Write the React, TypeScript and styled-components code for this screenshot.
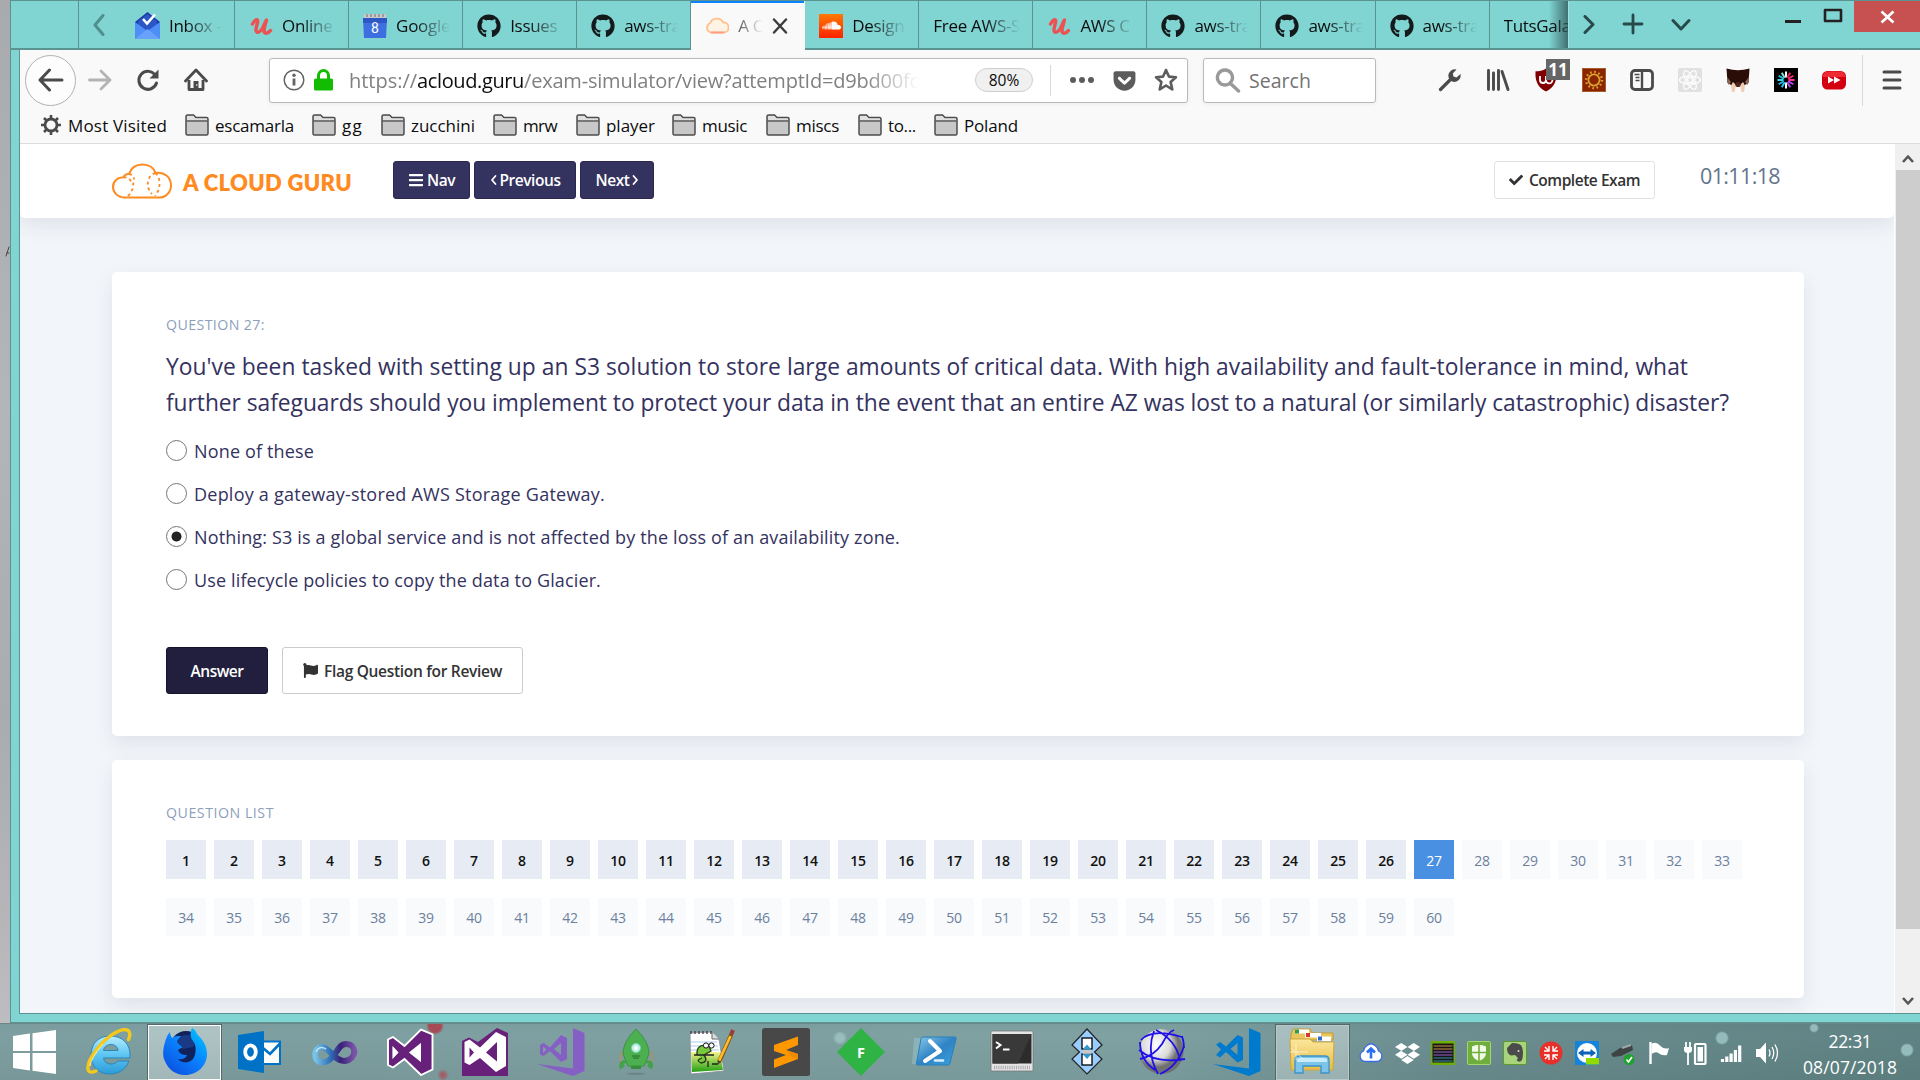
import React, { useLayoutEffect, useRef, useState } from "react";
import styled, { createGlobalStyle, css } from "styled-components";
import {
  FaBars,
  FaCheck,
  FaDropbox,
  FaFlag,
  FaGetPocket,
  FaGithub,
  FaSoundcloud,
} from "react-icons/fa";

const teal = "#80d4d2";
const tealEdge = "#5b9391";
const navy = "#34325e";
const ink = "#4a4a4a";

const Global = createGlobalStyle`
  html, body { margin: 0; padding: 0; overflow: hidden; }
  * { box-sizing: border-box; }
  body { font-family: "Open Sans", "Noto Sans", sans-serif; font-size: 17px; color: #0c0c0d; }
  svg { display: block; flex: none; }
`;

/* ---------- text fitted to a known advance width ---------- */

const FitSpan = styled.span`
  display: inline-block;
  align-self: flex-start;
  white-space: pre;
`;

function Fit({ w, children }: { w: number; children: string }) {
  const ref = useRef<HTMLSpanElement>(null);
  const [spacing, setSpacing] = useState(0);
  useLayoutEffect(() => {
    const el = ref.current;
    if (!el) return;
    el.style.letterSpacing = "0px";
    const next = (w - el.getBoundingClientRect().width) / children.length;
    el.style.letterSpacing = `${next}px`;
    setSpacing(next);
  }, [w, children]);
  return (
    <FitSpan ref={ref} style={{ letterSpacing: `${spacing}px` }}>
      {children}
    </FitSpan>
  );
}

/* ---------- shell ---------- */

const Desktop = styled.div`
  width: 1920px;
  height: 1080px;
  display: grid;
  grid-template-rows: 1023px 57px;
  overflow: hidden;
`;

const Upper = styled.div`
  display: grid;
  grid-template-columns: 10px 1910px;
`;

const Wallpaper = styled.div`
  background: linear-gradient(#a9aaad, #b4b5b8 40%, #a9abae 70%, #bdbcc0);
  padding-top: 244px;
`;

const Frame = styled.div`
  background: ${teal};
  border-left: 1px solid ${tealEdge};
  border-top: 1px solid ${tealEdge};
  border-bottom: 1px solid ${tealEdge};
  display: grid;
  grid-template-rows: 49px 964px 1fr;
  width: 1910px;
  height: 1023px;
`;

/* ---------- tab strip ---------- */

const TabStrip = styled.div`
  display: flex;
  height: 49px;
`;

const StripLead = styled.div`
  width: 68px;
  border-right: 1px solid ${tealEdge};
  box-shadow: inset 0 -2px ${tealEdge};
  flex: none;
`;

const ScrollLeft = styled.div`
  width: 42px;
  flex: none;
  display: flex;
  justify-content: center;
  padding: 13px 2px 0 0;
  box-shadow: inset 0 -2px ${tealEdge};
`;

const TabList = styled.div`
  display: flex;
  width: 1448px;
  flex: none;
  overflow: hidden;
  position: relative;
`;

const Tab = styled.div<{ $active?: boolean }>`
  flex: none;
  width: 114.05px;
  height: 49px;
  border-right: 1px solid ${tealEdge};
  display: flex;
  align-items: center;
  padding: 0 12px 0 14px;
  gap: 9px;
  box-shadow: inset 0 -2px ${tealEdge};
  ${(p) =>
    p.$active &&
    css`
      background: #f9f9fa;
      box-shadow: inset 0 2px #0a84ff;
      border-right-color: transparent;
      padding-right: 16px;
    `}
`;

const TabTitle = styled.div`
  flex: 1;
  min-width: 0;
  overflow: hidden;
  white-space: nowrap;
  font-size: 17px;
  letter-spacing: -0.3px;
  color: #0c0c0d;
  mask-image: linear-gradient(to left, transparent, #000 36px);
`;

const StripFade = styled.div`
  position: absolute;
  right: 0;
  top: 0;
  width: 20px;
  height: 47px;
  border-right: 1px solid #a3dfdd;
  background: linear-gradient(to right, transparent, rgba(30, 60, 62, 0.65));
`;

const StripTail = styled.div`
  flex: 1;
  display: flex;
  box-shadow: inset 0 -2px ${tealEdge};
`;

const TailButton = styled.div<{ $w: number; $top: number }>`
  width: ${(p) => p.$w}px;
  padding-top: ${(p) => p.$top}px;
  display: flex;
  justify-content: center;
  flex: none;
`;

const WindowButtons = styled.div`
  margin-left: auto;
  display: flex;
`;

const CloseButton = styled.div`
  width: 67px;
  height: 31px;
  background: #c75050;
  display: grid;
  place-items: center;
`;

/* ---------- toolbar ---------- */

const Inner = styled.div`
  margin-left: 8px;
  border-left: 1px solid ${tealEdge};
  border-bottom: 1px solid ${tealEdge};
  display: grid;
  grid-template-rows: 94px 870px;
  background: #f9f9fa;
`;

const Chrome = styled.div`
  border-bottom: 1px solid #dcdcdd;
  display: grid;
  grid-template-rows: 60px 33px;
`;

const Toolbar = styled.div`
  display: flex;
  align-items: center;
  padding-left: 5px;
`;

const BackButton = styled.div`
  width: 51px;
  height: 51px;
  border: 1px solid #b1b1b1;
  border-radius: 50%;
  background: #fdfdfd;
  display: grid;
  place-items: center;
`;

const ToolSlot = styled.div<{ $w?: number }>`
  width: ${(p) => p.$w ?? 48}px;
  height: 48px;
  flex: none;
  display: grid;
  place-items: center;
  position: relative;
`;

const Field = styled.div<{ $w: number; $ml: number }>`
  width: ${(p) => p.$w}px;
  margin-left: ${(p) => p.$ml}px;
  height: 45px;
  flex: none;
  background: #fff;
  border: 1px solid #b9b9b9;
  border-radius: 3px;
  box-shadow: 0 1px 4px rgba(0, 0, 0, 0.06);
  display: flex;
  align-items: center;
`;

const Url = styled.div`
  margin-left: 16px;
  width: 570px;
  white-space: nowrap;
  overflow: hidden;
  font-size: 20px;
  color: #808080;
  mask-image: linear-gradient(to left, transparent, #000 56px);
  b {
    font-weight: 400;
    color: #0c0c0d;
  }
`;

const ZoomPill = styled.div`
  margin-left: 56px;
  width: 58px;
  height: 24px;
  border: 1px solid #cfcfcf;
  border-radius: 12px;
  background: #f0f0f0;
  font-size: 15.5px;
  line-height: 22px;
  text-align: center;
`;

const Divider = styled.div<{ $h: number; $ml: number }>`
  width: 1px;
  height: ${(p) => p.$h}px;
  margin-left: ${(p) => p.$ml}px;
  background: #d9d9da;
  flex: none;
`;

const SearchText = styled.div`
  margin-left: 8px;
  font-size: 19.5px;
  color: #737373;
`;

const Extensions = styled.div`
  display: flex;
  margin-left: 50px;
`;

const Badge = styled.div`
  position: absolute;
  left: 24px;
  top: 3px;
  width: 24px;
  height: 21px;
  background: #666;
  color: #fff;
  font: 700 17px/21px "Open Sans", sans-serif;
  text-align: center;
`;

const Bookmarks = styled.div`
  display: flex;
  padding-left: 20px;
  height: 30px;
  align-items: center;
`;

const Bookmark = styled.div<{ $w: number }>`
  width: ${(p) => p.$w}px;
  display: flex;
  align-items: center;
  gap: 6px;
  font-size: 17px;
  flex: none;
`;

/* ---------- page ---------- */

const Viewport = styled.div`
  display: grid;
  grid-template-columns: 1fr 26px;
  height: 869px;
`;

const Page = styled.div`
  background: #f2f6fa;
  overflow: hidden;
  height: 869px;
  border-right: 1px solid #fff;
`;

const Header = styled.header`
  height: 74px;
  background: #fff;
  border-radius: 0 0 5px 5px;
  box-shadow: 0 8px 20px rgba(40, 40, 80, 0.09);
  display: flex;
  align-items: flex-start;
  padding: 17px 0 0 92px;
`;

const Brand = styled.div`
  display: flex;
  align-items: center;
  margin-top: 2px;
  width: 281px;
  color: #ff8a1f;
`;

const BrandName = styled.div`
  margin-left: 11px;
  font: 800 22px/30px "Lato", sans-serif;
  margin-top: 4px;
`;

const NavButton = styled.button<{ $w: number; $gap: number }>`
  width: ${(p) => p.$w}px;
  height: 38px;
  margin-right: 4px;
  padding: 0;
  background: ${navy};
  border: 1px solid #2a2850;
  border-radius: 3px;
  color: #fff;
  font: 600 15.5px "Open Sans", sans-serif;
  display: flex;
  align-items: center;
  justify-content: center;
  gap: ${(p) => p.$gap}px;
  ${FitSpan} {
    align-self: center;
  }
`;

const OutlineButton = styled.button<{ $w: number; $h: number; $edge: string }>`
  width: ${(p) => p.$w}px;
  height: ${(p) => p.$h}px;
  padding: 0;
  background: #fff;
  border: 1px solid ${(p) => p.$edge};
  border-radius: 3px;
  color: #333;
  font: 600 15.5px "Open Sans", sans-serif;
  display: flex;
  align-items: center;
  justify-content: center;
  gap: 6px;
  ${FitSpan} {
    align-self: center;
  }
`;

const HeaderRight = styled.div`
  margin-left: auto;
  display: flex;
  padding-right: 114px;
`;

const Timer = styled.div`
  margin-left: 45px;
  font-size: 21.5px;
  line-height: 30px;
  color: #64748c;
`;

const Card = styled.section<{ $h: number; $mt: number }>`
  width: 1692px;
  height: ${(p) => p.$h}px;
  margin: ${(p) => p.$mt}px 0 0 92px;
  padding: 42px 54px 0;
  background: #fff;
  border-radius: 5px;
  box-shadow: 0 8px 20px rgba(40, 40, 80, 0.09);
`;

const Eyebrow = styled.h2`
  margin: 0;
  font: 500 14.2px/22px "Open Sans", sans-serif;
  color: #8d9fbb;
`;

const Question = styled.p`
  margin: 13px 0 0;
  font-size: 22.8px;
  line-height: 36px;
  color: ${navy};
  display: flex;
  flex-direction: column;
`;

const Options = styled.div`
  margin-top: 8px;
  display: grid;
  grid-auto-rows: 43px;
`;

const Option = styled.label`
  display: flex;
  align-items: center;
  gap: 7px;
  height: 43px;
  font-size: 18px;
  color: ${navy};
  ${FitSpan} {
    align-self: center;
  }
`;

const Radio = styled.span<{ $on: boolean }>`
  width: 21px;
  height: 21px;
  border: 1px solid #767676;
  border-radius: 50%;
  background: ${(p) => (p.$on ? "radial-gradient(circle, #222 4.6px, #fff 5.4px)" : "#fff")};
`;

const Actions = styled.div`
  display: flex;
  gap: 14px;
  margin-top: 46px;
`;

const AnswerButton = styled.button`
  width: 102px;
  height: 47px;
  padding: 0;
  background: #211f3d;
  border: 1px solid #15132c;
  border-radius: 3px;
  color: #fff;
  font: 600 15.5px "Open Sans", sans-serif;
`;

const Cells = styled.div`
  margin-top: 16px;
  display: grid;
  grid-template-columns: repeat(33, 40px);
  grid-template-rows: 39px 38px;
  column-gap: 8px;
  row-gap: 19px;
`;

const Cell = styled.div<{ $state: "done" | "now" | "todo" }>`
  display: flex;
  justify-content: center;
  font-size: 14px;
  line-height: 42px;
  height: 100%;
  letter-spacing: -0.2px;
  font-weight: ${(p) => ({ done: 600, now: 500, todo: 400 })[p.$state]};
  background: ${(p) => ({ done: "#e7ecf4", now: "#4990e2", todo: "#f8fafc" })[p.$state]};
  color: ${(p) => ({ done: "#111", now: "#fff", todo: "#6c7f9c" })[p.$state]};
  &:nth-child(n + 34) {
    line-height: 39px;
  }
`;

const Scrollbar = styled.div`
  background: #f0f0f0;
  display: grid;
  grid-template-rows: 26px 759px 1fr;
  justify-items: center;
`;

const Thumb = styled.div`
  width: 24px;
  background: #cdcdcd;
`;

const ScrollArrow = styled.div<{ $end?: boolean }>`
  align-self: ${(p) => (p.$end ? "end" : "start")};
  padding: ${(p) => (p.$end ? "0 0 7px" : "10px 0 0")};
`;

/* ---------- taskbar ---------- */

const Taskbar = styled.div`
  display: flex;
  border-top: 1px solid #6d8584;
  background:
    radial-gradient(circle at 435px 2px, #a64a55 6px, transparent 9px),
    radial-gradient(circle at 443px 51px, rgba(176, 70, 85, 0.7) 2px, transparent 6px),
    radial-gradient(circle at 1722px 14px, #95bcbc 5px, transparent 7px),
    radial-gradient(circle at 1814px 4px, #95bcbc 3px, transparent 5px),
    radial-gradient(circle at 1907px 26px, #95bcbc 5px, transparent 7px),
    radial-gradient(circle at 840px 14px, #98bdbd 4px, transparent 7px),
    linear-gradient(rgba(0, 0, 0, 0.02), transparent 20%, rgba(0, 0, 0, 0.05)),
    linear-gradient(to right, #7e9fa1 0, #7fa1a2 60%, #6c8e90 75%, #5f8384 100%);
`;

const Apps = styled.div`
  display: flex;
  width: 1353px;
  flex: none;
`;

const AppSlot = styled.div<{ $open?: boolean; $first?: boolean }>`
  width: 75.2px;
  margin-left: ${(p) => (p.$first ? "-3.4px" : "0")};
  flex: none;
  display: grid;
  place-items: center;
  padding: 0 1px;
  ${(p) =>
    p.$open &&
    css`
      background: linear-gradient(rgba(255, 255, 255, 0.38), rgba(255, 255, 255, 0.3)) content-box;
    `}
`;

const OpenRim = styled.div<{ $bright?: boolean }>`
  width: 73px;
  height: 55px;
  outline: 1px solid #55696a;
  outline-offset: 0;
  border: 1px solid ${(p) => (p.$bright ? "#fff" : "#b5c9c9")};
  display: grid;
  place-items: center;
`;

const Tray = styled.div`
  display: flex;
`;

const TraySlot = styled.div`
  width: 36px;
  display: grid;
  place-items: center;
  padding-top: 2px;
`;

const Clock = styled.div`
  width: 130px;
  display: flex;
  flex-direction: column;
  align-items: center;
  justify-content: center;
  color: #fff;
  font-size: 17.5px;
  line-height: 26px;
  padding-top: 3px;
  ${FitSpan} {
    align-self: center;
  }
`;

/* ---------- small icons ---------- */

const Stroke = ({
  d,
  w = 24,
  h = 24,
  sw = 3,
  color = ink,
  cap = "round",
}: {
  d: string;
  w?: number;
  h?: number;
  sw?: number;
  color?: string;
  cap?: "round" | "butt";
}) => (
  <svg width={w} height={h} viewBox={`0 0 ${w} ${h}`}>
    <path d={d} fill="none" stroke={color} strokeWidth={sw} strokeLinecap={cap} strokeLinejoin="round" />
  </svg>
);

const InboxIcon = () => (
  <svg width="25" height="28" viewBox="0 0 25 28">
    <path d="M0 10 12.500 0 25 10V18H0Z" fill="#1c3aa9" />
    <path d="M3 9.500 12.500 2 22 9.500V18H3Z" fill="#2a56c6" />
    <path d="M0 10 12.500 19 25 10V27H0Z" fill="#4e8ef7" />
    <path d="M0 27 12.500 17 25 27Z" fill="#69a2fb" />
    <path d="m8 7 4 4.500 8-9" fill="none" stroke="#fff" strokeWidth="2.600" />
  </svg>
);

const UdemyIcon = () => (
  <svg width="24" height="24" viewBox="0 0 24 24">
    <path
      d="M3.500 10C5 7.500 7 5 8.500 6c1.300 1.500-2 7-1.500 10.500.5 2.800 4 2 6-1.500C15 12 15.500 8.500 17.500 6c-1 4-3 8.500-2.300 12 .6 2 4 1.500 6.300-1.500"
      fill="none"
      stroke="#ec5252"
      strokeWidth="3.400"
      strokeLinecap="round"
      strokeLinejoin="round"
    />
  </svg>
);

const CalendarIcon = () => (
  <svg width="24" height="24" viewBox="0 0 24 24">
    <rect x="1" y="0" width="22" height="6" fill="#c9c9c9" />
    <path d="M4 0v3M8 0v3M12 0v3M16 0v3M20 0v3" stroke="#8d8d8d" strokeWidth="1.500" />
    <path d="M0 4H24L23 24H1Z" fill="#3d6fe0" />
    <path d="M0 4H24V9H0Z" fill="#2d57c4" />
    <text x="12" y="19" fill="#fff" fontSize="14" textAnchor="middle" fontFamily="Roboto, sans-serif">8</text>
  </svg>
);

const CloudFavicon = () => (
  <svg width="24" height="24" viewBox="0 0 24 24">
    <path d="M6 18.500a5 5 0 0 1-.8-9.500 7 6.500 0 0 1 13-.5A5 5 0 0 1 19 18.500Z" fill="#fff3e6" stroke="#ffc18a" strokeWidth="1.800" />
    <path d="M6 18.500H19" stroke="#ff9c86" strokeWidth="1.800" />
  </svg>
);

const SoundcloudBox = styled.div`
  width: 24px;
  height: 24px;
  flex: none;
  display: grid;
  place-items: center;
  background: linear-gradient(#ff7a00, #ff2200);
  color: #fff;
`;

const FolderIcon = () => (
  <svg width="24" height="22" viewBox="0 0 24 22">
    <path d="M1 19.500V2.500Q1 1 2.500 1H8.500L11 3.500H21.500Q23 3.500 23 5V19.500Q23 21 21.500 21H2.500Q1 21 1 19.500Z" fill="#c8c8c8" stroke="#4c4c4c" strokeWidth="1.500" />
    <path d="M1.500 7H22.500" stroke="#4c4c4c" strokeWidth="1.300" />
    <path d="M2 2H8.300L10.500 4.500H22V6H2Z" fill="#e0e0e0" />
  </svg>
);

const GearIcon = () => (
  <svg width="22" height="22" viewBox="0 0 22 22">
    <g stroke="#4a4a4a" fill="none">
      <circle cx="11" cy="11" r="6" strokeWidth="2.800" />
      <path d="M11 1V5M11 17V21M1 11H5M17 11H21M4 4 6.500 6.500M15.500 15.500 18 18M18 4 15.500 6.500M6.500 15.500 4 18" strokeWidth="2.600" />
    </g>
  </svg>
);

const ReloadIcon = () => (
  <svg width="24" height="24" viewBox="0 0 24 24">
    <path d="M19.500 7.500A9 9 0 1 0 20.500 15" fill="none" stroke={ink} strokeWidth="3" strokeLinecap="round" />
    <path d="M22.500 1.500V10.500H13.500Z" fill={ink} />
  </svg>
);

const HomeIcon = () => (
  <svg width="24" height="24" viewBox="0 0 24 24">
    <path d="M1.500 13 12 2 22.500 13" fill="none" stroke={ink} strokeWidth="2.800" strokeLinecap="round" strokeLinejoin="round" />
    <path d="M5 12V21.500H19V12" fill="none" stroke={ink} strokeWidth="2.800" strokeLinejoin="round" />
    <path d="M9.500 21V13H14.500V21Z" fill={ink} />
    <circle cx="12.800" cy="17" r=".8" fill="#fff" />
  </svg>
);

const InfoIcon = () => (
  <svg width="22" height="22" viewBox="0 0 22 22">
    <circle cx="11" cy="11" r="9.800" fill="none" stroke="#636363" strokeWidth="1.500" />
    <rect x="9.600" y="9.500" width="2.800" height="7" fill="#636363" />
    <circle cx="11" cy="6.300" r="1.700" fill="#636363" />
  </svg>
);

const LockIcon = () => (
  <svg width="19" height="22" viewBox="0 0 19 22">
    <path d="M4.500 11V6.500a5 5 0 0 1 10 0V11" fill="none" stroke="#12bc00" strokeWidth="3" />
    <rect x="0" y="9.500" width="19" height="12" rx="1.500" fill="#12bc00" />
  </svg>
);

const StarIcon = () => (
  <svg width="24" height="24" viewBox="0 0 24 24">
    <path d="m12 2 2.900 6.600 7.100.6-5.400 4.700 1.700 7.600L12 17.500l-6.300 4 1.700-7.600L2 9.200l7.100-.6Z" fill="none" stroke="#5c5c5c" strokeWidth="2.600" strokeLinejoin="round" />
  </svg>
);

const WrenchIcon = () => (
  <svg width="24" height="24" viewBox="0 0 24 24">
    <path d="M2.500 21.500 13 11" stroke={ink} strokeWidth="3.200" strokeLinecap="round" />
    <path d="M18.500 1.500a6.500 6.500 0 0 0-7.500 9l3 3a6.500 6.500 0 0 0 8.500-7.500L18.500 9.500 15.500 8.500 14.800 5.500Z" fill={ink} />
  </svg>
);

const LibraryIcon = () => (
  <svg width="24" height="24" viewBox="0 0 24 24">
    <g stroke={ink} strokeWidth="2.900" strokeLinecap="round">
      <path d="M2.500 2.500V21.500M7.500 5V21.500M12.500 2.500V21.500M16 3.500 22 21.500" fill="none" />
    </g>
  </svg>
);

const ShieldIcon = () => (
  <svg width="24" height="24" viewBox="0 0 24 24">
    <path d="M12 .5C9 3 5 3.200 1.500 3.200 1 12 3 19 12 23.500 21 19 23 12 22.500 3.200 19 3.200 15 3 12 .5Z" fill="#800000" />
    <path d="M6 8v4q0 3 3 3t3-3V8v4a3.200 3.200 0 1 0 3.200-3" fill="none" stroke="#fff" strokeWidth="1.800" />
  </svg>
);

const SunIcon = () => (
  <svg width="24" height="24" viewBox="0 0 24 24">
    <rect width="24" height="24" fill="#8b2500" />
    <rect x=".5" y=".5" width="23" height="23" fill="none" stroke="#a55c2c" />
    <circle cx="12" cy="12" r="5.600" fill="none" stroke="#dba330" strokeWidth="1.800" />
    <circle cx="12" cy="12" r="8" fill="none" stroke="#dba330" strokeWidth="2.400" strokeDasharray="1.600 2.589" />
  </svg>
);

const SidebarIcon = () => (
  <svg width="24" height="24" viewBox="0 0 24 24">
    <rect x="1.500" y="2.500" width="21" height="19" rx="3.500" fill="none" stroke={ink} strokeWidth="2.800" />
    <path d="M12 2.500V21.500" stroke={ink} strokeWidth="2.400" />
    <path d="M4.500 6.500H9.500M5.500 9.500H9.500M5.500 12.500H9.500" stroke={ink} strokeWidth="1.500" />
  </svg>
);

const ReactIcon = () => (
  <svg width="24" height="24" viewBox="0 0 24 24">
    <rect width="24" height="24" rx="2" fill="#e1e1e1" />
    <g fill="none" stroke="#fff" strokeWidth="1.200">
      <ellipse cx="12" cy="12" rx="10.500" ry="4" />
      <ellipse cx="12" cy="12" rx="10.500" ry="4" transform="rotate(60 12 12)" />
      <ellipse cx="12" cy="12" rx="10.500" ry="4" transform="rotate(120 12 12)" />
      <circle cx="12" cy="12" r="2.500" />
    </g>
  </svg>
);

const FaceIcon = () => (
  <svg width="24" height="24" viewBox="0 0 24 24">
    <path d="M.5.500Q12 4 23.500.5L22.500 15 17 18H7L1.500 15Z" fill="#2b0d08" />
    <path d="M1 9 2.500 17 5 14ZM23 9 21.500 17 19 14Z" fill="#8d6557" />
    <path d="M6 24 5 17.500l2-3.500 3 3-1.500 7ZM18 24l1-6.500-2-3.500-3 3 1.500 7Z" fill="#f0cdb4" />
    <circle cx="12" cy="16.500" r="2.600" fill="#4e2419" />
  </svg>
);

const BurstIcon = () => (
  <svg width="24" height="24" viewBox="0 0 24 24">
    <rect width="24" height="24" fill="#000" />
    {["#fff", "#e01e5a", "#ff2f6a", "#ff2fa0", "#b84af0", "#a847e8", "#fff", "#28c8f0", "#1fb6e6", "#36d6e0", "#1fc6e6", "#7be0d6"].map((c, i) => (
      <path key={i} d="M12 3.500V9.500" stroke={c} strokeWidth="2" transform={`rotate(${i * 30} 12 12)`} />
    ))}
  </svg>
);

const ForwardBadge = () => (
  <svg width="24" height="24" viewBox="0 0 24 24">
    <rect x="0" y="3" width="24" height="18.500" rx="5.500" fill="#d5000f" />
    <path d="M4 3.800Q12 2.500 20 3.800 23 5 23.500 9H.5Q1 5 4 3.800Z" fill="#ee2a34" />
    <path d="M6 8.500 12 12 6 15.500ZM12 8.500 18.500 12 12 15.500Z" fill="#fff" />
  </svg>
);

const BrandCloud = () => (
  <svg width="60" height="36" viewBox="0 0 60 36">
    <g fill="none" stroke="#ff8a1f" strokeWidth="2">
      <path d="M13 34.500C5 34.500 1 29 1 24c0-6 5-10 10.500-9.800C12 12 15 10.500 17 11 19 5 24 1.500 30.500 1.500 37 1.500 42 5 43.500 10 52 8.500 59 14 59 22.500 59 29 54 34.500 47 34.500Z" />
      <path d="M11.500 14.200C15 14 18 16 19.500 19M17 11c3 .5 5 2.500 5 5.500M16 33C20 29 22 24 21 18M43.500 10C35 12 33 24 40 31M43.500 10C49 15 49 26 43 33" strokeDasharray="3 3" strokeWidth="1.800" />
    </g>
  </svg>
);

/* ---------- taskbar icons, 48 x 48 ---------- */

const Art = ({ children, s = 48 }: { children: React.ReactNode; s?: number }) => (
  <svg width={s} height={s} viewBox={`0 0 ${s} ${s}`}>
    {children}
  </svg>
);

const StartIcon = () => (
  <Art>
    <path d="M3 8 20 5.500V23H3ZM22.500 5.200 46 2V23H22.500ZM3 25H20V42.500L3 40ZM22.500 25H46V46L22.500 42.800Z" fill="#fff" />
  </Art>
);

const IeIcon = () => (
  <Art>
    <defs>
      <linearGradient id="ie" x1="0" y1="0" x2="0" y2="1">
        <stop offset="0" stopColor="#b5ecff" />
        <stop offset=".5" stopColor="#5cc5f2" />
        <stop offset="1" stopColor="#2c9bd9" />
      </linearGradient>
    </defs>
    <path
      d="M45 30H18.500C19.500 37.500 30 37.500 32.500 33H44C40 43 32 46 25 46 13 46 6 38 6 27 6 15 14 8 25 8 38 8 46 16 45 30ZM18.500 22.500H33C32.500 14.500 19.500 14.500 18.500 22.500Z"
      fill="url(#ie)"
      stroke="#2b86b8"
      strokeWidth="1"
      fillRule="evenodd"
    />
    <path d="M11 43C0 48 0 36 12 21 24 6 38 -1 43 2.500q3.500 2.500.5 9" fill="none" stroke="#f4c81c" strokeWidth="3.400" strokeLinecap="round" />
    <path d="M5 38Q6 30 18 16" fill="none" stroke="#fff2a0" strokeWidth="1" />
  </Art>
);

const FirefoxIcon = () => (
  <Art>
    <defs>
      <linearGradient id="ff" x1="1" y1="0" x2=".2" y2="1">
        <stop offset="0" stopColor="#0cf" />
        <stop offset=".5" stopColor="#0a84ff" />
        <stop offset="1" stopColor="#0b4fe0" />
      </linearGradient>
    </defs>
    <circle cx="25" cy="19" r="16" fill="#10225c" />
    <path d="M14 11Q24 4 36 9L32 19 22 21Z" fill="#1b3a86" />
    <path
      d="M5 11C3 17 1 24 3 31 7 42 15 47 24 47 37 47 46 37 46 26 46 17 41 11 36 6 35 3 33 1 31 0 29 5 29 9 32 13 36 18 35 27 32 31 28 36 20 35 17 31 22 32 25 30 26 27 21 27 18 25 17 22Q19 20 21 20C22 18 17 17 16 13 17 11 19 9 20 8 16 8 13 8 11 10 9 7 9 5 9 4Q6 7 5 11Z"
      fill="url(#ff)"
    />
  </Art>
);

const OutlookIcon = () => (
  <Art>
    <path d="M26 13.500H44V36H26Z" fill="#fff" stroke="#0072c6" strokeWidth="2" />
    <path d="m27 20 7 6 10-10.500" fill="none" stroke="#0072c6" strokeWidth="2.600" />
    <path d="M2 7 28 3V45L2 41Z" fill="#0072c6" />
    <ellipse cx="14.500" cy="24" rx="5.300" ry="6.700" fill="none" stroke="#fff" strokeWidth="3.800" />
  </Art>
);

const InfinityIcon = () => (
  <Art>
    <defs>
      <linearGradient id="inf">
        <stop offset="0" stopColor="#78c3e6" />
        <stop offset=".4" stopColor="#2e6db2" />
        <stop offset=".65" stopColor="#3b2178" />
        <stop offset="1" stopColor="#7a54a8" />
      </linearGradient>
    </defs>
    <path d="M24 26C18 34 13 35 9 34 2 32 3 20 10 19 18 18 23 34 34 33 46 31 46 17 36 16 30 15 27 21 24 26Z" fill="none" stroke="url(#inf)" strokeWidth="6" />
    <path d="M5 24Q8 17 15 21" fill="none" stroke="#b9e4f5" strokeWidth="1.500" />
  </Art>
);

const VisualStudio = () => (
  <Art>
    <path
      d="M2.500 12 7 9.500 18.500 18 35 2 46 6.500V41L35 46.500 18.500 31 7 39 2.500 36.500ZM6.500 18V31L12.500 24.500ZM23 24.500 35 34V15Z"
      fill="#68217a"
      fillRule="evenodd"
    />
    <path d="M6.500 18V31L12.500 24.500ZM23 24.500 35 34V15Z" fill="#fff" />
    <path d="M2 11.500 7 9 18.500 18 35 1.500 46.500 6.300V41.500L35 47 18.500 31 7 39.500 2 37Z" fill="none" stroke="#fff" strokeWidth="1.900" />
  </Art>
);

const VisualStudioInverse = () => (
  <Art>
    <path d="M1 13 8 9.500 17 14 36 0 47 5V48H1Z" fill="#68217a" />
    <path
      d="M3.500 14 8.500 11.500 19 19.500 35 4 45 9V38L35 44 19 30 8.500 37 3.500 34.500ZM8.500 19.500V29.500L13 24.500ZM25 24.500 36 33.500V14Z"
      fill="#fff"
      fillRule="evenodd"
    />
  </Art>
);

const ribbon = "M36 0 47.500 5V43L36 48 0 36 36 40.500Z";

const VisualStudioLight = () => (
  <Art>
    <path d={ribbon} fill="#865fc5" />
    <path d="M3 17 6.500 15 13 19.500 24 7 30 10V31L24 34 13 23 6.500 28 3 26.500ZM6 18.500V25L9.500 21.500ZM17 21 24 27V15Z" fill="#865fc5" fillRule="evenodd" />
  </Art>
);

const CodeIcon = () => (
  <Art>
    <path d={ribbon} fill="#007acc" />
    <path d="M3 16.500 7 14 13 18.500 24.500 7 30 9.500V32L24.500 34.500 13 24 7 29.500 3 27 8 21.500ZM17.500 21 24.500 27V15Z" fill="#007acc" fillRule="evenodd" />
  </Art>
);

const RocketIcon = () => (
  <Art>
    <path d="M13 23Q6 25 10 37M35 23Q43 25 38 37" fill="none" stroke="#a59173" strokeWidth="2.200" />
    <path d="M24 1C15 10 11 18 11 26L16 38H32L37 26C37 18 33 10 24 1Z" fill="#4caf50" stroke="#3b9540" />
    <path d="M19 38V41H29V38Z" fill="#378c3e" />
    <path d="M15 34Q8 33 9 39L12 37M33 34Q41 33 39 39L36 37" fill="none" stroke="#43a047" strokeWidth="3" />
    <circle cx="24" cy="20" r="4.600" fill="#bff0e4" stroke="#78cfae" />
    <circle cx="24" cy="20" r="2" fill="#fff" />
    <path d="M20 28H28M21 30H27" stroke="#256d2b" strokeWidth="1.200" />
    <ellipse cx="24" cy="45.800" rx="9" ry="1" fill="#6b8082" />
  </Art>
);

const NotepadIcon = () => (
  <Art>
    <defs>
      <linearGradient id="npp" x1="0" y1="0" x2="0" y2="1">
        <stop offset="0" stopColor="#f4f48a" />
        <stop offset="1" stopColor="#22a012" />
      </linearGradient>
    </defs>
    <path d="M3 5 25 4 32 11 37 43 4 46Z" fill="#fff" stroke="#889" strokeWidth=".8" />
    <path d="M4 14H30M4 18H31M4 22H32" stroke="#a9cbe8" />
    <path d="M4 24H33L36 42 5 44Z" fill="url(#npp)" />
    <path d="M4 6V3M8 6V3M12 6V3M16 6V3M20 6V3M24 6V3" stroke="#444" strokeWidth="1.400" />
    <path d="M25 4V11H32" fill="#ddd" stroke="#666" />
    <path d="M10 27Q9 15 22 18L24 23 17 27Q22 34 14 35 8 32 15 30" fill="#78ca3c" stroke="#263b14" strokeWidth="1.300" />
    <circle cx="19" cy="17.500" r="2.600" fill="#fff" stroke="#111" />
    <circle cx="24.500" cy="17.500" r="2.600" fill="#fff" stroke="#111" />
    <path d="M7 27H27M21 33V39M25 36H31" stroke="#222" strokeWidth="1.300" />
    <path d="M32 34 44 7" stroke="#7a4a00" strokeWidth="4.200" />
    <path d="M32 33 43.500 8" stroke="#ffb92e" strokeWidth="2.800" />
    <path d="M44 7 46 2" stroke="#9c3b35" strokeWidth="4" />
    <path d="M30.500 37 31 32 34 34Z" fill="#443" />
  </Art>
);

const SublimeIcon = () => (
  <Art>
    <rect width="48" height="48" rx="2.500" fill="#484848" />
    <path d="M12 17 36 8.500V17L24 22 36 26V31L12 40V31.500L24 27 12 23Z" fill="#ff9800" />
    <path d="M24 22 36 26V31L30 29Z" fill="#f08a00" />
  </Art>
);

const DiamondIcon = () => (
  <Art>
    <path d="M24 0 48 24 24 48 0 24Z" fill="#2fb344" />
    <text x="24" y="29.500" fill="#fff" fontSize="14.500" fontWeight="700" textAnchor="middle" fontFamily="Open Sans, sans-serif">F</text>
  </Art>
);

const PowerShellIcon = () => (
  <Art>
    <defs>
      <linearGradient id="ps" x1="0" y1="0" x2="1" y2="1">
        <stop offset="0" stopColor="#8ccbe9" />
        <stop offset=".5" stopColor="#2f83c5" />
        <stop offset="1" stopColor="#3aa2dc" />
      </linearGradient>
    </defs>
    <path d="M2 10H14L8 36H0Z" fill="#a7d4e8" opacity=".35" />
    <path d="M11 9H43Q44.500 9 44 11L38 35Q37.500 37 36 37H6Q4 37 4.500 35L9 11Q9.500 9 11 9Z" fill="url(#ps)" stroke="#2680b8" />
    <path d="m18 13 10 10L13 33" fill="none" stroke="#fff" strokeWidth="4" strokeLinecap="round" strokeLinejoin="round" />
    <path d="M23 32.500H31" stroke="#d8eefa" strokeWidth="2.600" strokeLinecap="round" />
  </Art>
);

const TerminalIcon = () => (
  <Art>
    <rect x="3" y="3" width="42" height="40" rx="1" fill="#e4e4e4" stroke="#777" strokeWidth=".8" />
    <rect x="4.500" y="6" width="39" height="29.500" fill="#2c2c2c" />
    <path d="M4.500 6H43.500L30 35.500H4.500Z" fill="#393939" />
    <path d="M6 39.500H42" stroke="#aaa" strokeWidth="3.400" strokeDasharray="1 1.200" />
    <path d="m8 14 4.500 3L8 20.500" fill="none" stroke="#fff" strokeWidth="2" />
    <path d="M15 21.500H21.500" stroke="#fff" strokeWidth="2" />
  </Art>
);

const MergeIcon = () => (
  <Art>
    <path d="M24 1 39 17 31.500 24 39 31 24 46 9 31 16.500 24 9 17Z" fill="#99ccff" stroke="#222" strokeWidth="1.200" />
    <rect x="19" y="10" width="10" height="11" fill="#fff" stroke="#000" strokeWidth="1.300" />
    <rect x="19" y="26" width="10" height="11" fill="#fff" stroke="#000" strokeWidth="1.300" />
    <path d="M24 16.500 28.500 21.500H19.500ZM24 31 28.500 26H19.500Z" fill="#3399cc" />
    <rect x="19.500" y="21.800" width="9" height="4" fill="#c8c8c8" />
  </Art>
);

const SphereIcon = () => (
  <Art>
    <defs>
      <radialGradient id="sph" cx=".38" cy=".35">
        <stop offset="0" stopColor="#fff" />
        <stop offset=".65" stopColor="#dadada" />
        <stop offset="1" stopColor="#707070" />
      </radialGradient>
    </defs>
    <ellipse cx="23.500" cy="23.500" rx="22" ry="22.500" fill="url(#sph)" />
    <g fill="none" stroke="#1d10e8" strokeWidth="1.800">
      <path d="M3 12Q14 0 44 9M1 22Q18 36 47 31M2 31Q16 28 24 16 30 4 36 2M18 2Q38 12 42 32M16 3Q8 24 20 46M2 14Q2 32 17 42M46 18Q40 38 22 46M44 8Q46 14 46 20" />
    </g>
  </Art>
);

const ExplorerIcon = () => (
  <Art>
    <defs>
      <linearGradient id="exp" x1="0" y1="0" x2="0" y2="1">
        <stop offset="0" stopColor="#fbe79c" />
        <stop offset="1" stopColor="#e5bc49" />
      </linearGradient>
    </defs>
    <path d="M3 6 5 1H22L24 5H45V12H3Z" fill="#e9c65c" stroke="#c29b32" />
    <rect x="7" y="1.500" width="14" height="4" fill="#fff" />
    <rect x="7" y="1.500" width="4" height="4" fill="#2f9e4c" />
    <rect x="17" y="5" width="16" height="4.500" fill="#fff" />
    <rect x="18" y="5" width="4" height="4" fill="#d6382c" />
    <path d="M2 11H22L25 14H46L45 42H3Z" fill="url(#exp)" stroke="#cfa53b" />
    <rect x="29" y="8.500" width="14" height="4.500" fill="#fff" />
    <rect x="30" y="8.500" width="4" height="4" fill="#2a6fd0" />
    <path d="M7 45V32Q7 28 11 28H37Q41 28 41 32V45H33V38H15V45Z" fill="#7cc4e8" stroke="#3a93c8" strokeWidth="1.300" />
    <path d="M9 32Q9 30 12 30H36Q39 30 39 32V34H9Z" fill="#c8ecfa" />
    <path d="M8 16V32M2 24H20M3 20 15 31" stroke="#fff" strokeWidth="1" opacity=".6" />
  </Art>
);

/* ---------- tray icons, 24 x 24 ---------- */

const trayIcons: React.ReactNode[] = [
  <Art s={24}>
    <path d="M6 20.500A5.500 5.500 0 0 1 4.500 10 8 8 0 0 1 8 4.500Q12 1 16 4.500A8 8 0 0 1 19.500 10 5.500 5.500 0 0 1 18 20.500Z" fill="#fff" stroke="#3b6fe0" strokeWidth="1.300" />
    <path d="M12 17.500V8M8 11.500 12 7.500 16 11.500" fill="none" stroke="#2a6df0" strokeWidth="2.600" />
  </Art>,
  <FaDropbox size={25} color="#fff" />,
  <Art s={24}>
    <rect width="24" height="24" fill="#6fae00" />
    <rect x="1.500" y="2.500" width="21" height="19" fill="#161616" />
    <path d="M2.500 5H21.500M2.500 8H21.500" stroke="#e0a04a" strokeWidth=".9" />
    <path d="M2.500 11H21.500M2.500 14H21.500" stroke="#a96ae0" strokeWidth=".9" />
    <path d="M2.500 17H21.500M2.500 20H21.500" stroke="#3f9fbf" strokeWidth=".9" />
  </Art>,
  <Art s={24}>
    <rect x=".5" y=".5" width="23" height="23" rx="1" fill="#6fae3c" stroke="#a5d66c" />
    <path d="M5 5.500Q12 2 19 5.500V13Q18 18 12 20 6 18 5 13Z" fill="#f2fae8" />
    <path d="M12 3V20M4 11.500H20" stroke="#6fae3c" strokeWidth="1.600" />
  </Art>,
  <Art s={24}>
    <rect x=".5" y=".5" width="23" height="23" rx="1.500" fill="#a8d47c" stroke="#5d9c28" />
    <path d="M4 7 9 2Q18 2 19 6 21 12 19 19 17 22 13.500 19.500L15 17 12 14 8 14.500Q4 13 4 7Z" fill="#4b4b4b" />
    <circle cx="15.500" cy="10" r="1" fill="#ddd" />
  </Art>,
  <Art s={24}>
    <circle cx="12" cy="12" r="11.500" fill="#e8302a" />
    <path d="M10 5V10H5M14 5V10H19M10 19V14H5M14 19V14H19M10 10 6 6M14 10 18 6M10 14 6 18M14 14 18 18" fill="none" stroke="#fff" strokeWidth="1.400" />
  </Art>,
  <Art s={24}>
    <rect width="24" height="24" fill="#1383dc" />
    <circle cx="12" cy="12" r="10" fill="#fff" />
    <path d="M3 12 8.500 8V10.500H15.500V8L21 12 15.500 16V13.500H8.500V16Z" fill="#0a63b8" />
    <rect x="11" y="17" width="13" height="6.500" fill="#91dc00" />
  </Art>,
  <Art s={24}>
    <path d="m0 13 9-6 12-3 1 5-12 6-8 1Z" fill="#3e4444" />
    <path d="m11 7 9-3" stroke="#9aa" strokeWidth="2" />
    <circle cx="18" cy="18.500" r="5.500" fill="#1fa22e" />
    <path d="m15.500 18.500 2 2.500 3.500-5" fill="none" stroke="#fff" strokeWidth="1.600" />
  </Art>,
  <Art s={24}>
    <path d="M3.500 1V23" stroke="#fff" strokeWidth="2.400" />
    <path d="M4.500 3Q9 0 13 4.500T22 7L20 14Q15 15 12 12.500T4.500 13Z" fill="#fff" />
  </Art>,
  <Art s={24}>
    <rect x="12" y="3" width="10.500" height="20" rx="1" fill="none" stroke="#fff" strokeWidth="2.200" />
    <rect x="14.500" y="6" width="5.500" height="14.500" fill="#fff" />
    <path d="M3 1V6M7 1V6M5 11V24" stroke="#fff" strokeWidth="1.800" />
    <path d="M1 6H9V9Q9 12 5 12T1 9Z" fill="#fff" />
  </Art>,
  <Art s={24}>
    <path d="M3.500 21V18M7.800 21V15.500M12.100 21V12.500M16.400 21V9M20.700 21V4.500" stroke="#fff" strokeWidth="3.200" />
  </Art>,
  <Art s={24}>
    <path d="M1 8H5L11 1.500V22.500L5 16H1Z" fill="#fff" />
    <path d="M14 8.500Q16 12 14 15.500M17 6Q20.500 12 17 18M20 3.500Q25 12 20 20.500" fill="none" stroke="#fff" strokeWidth="1.300" />
  </Art>,
];

const github = <FaGithub size={24} color="#14191b" />;

const tabs: { icon?: React.ReactNode; title: string; active?: boolean }[] = [
  { icon: <InboxIcon />, title: "Inbox -" },
  { icon: <UdemyIcon />, title: "Online" },
  { icon: <CalendarIcon />, title: "Google" },
  { icon: github, title: "Issues" },
  { icon: github, title: "aws-tra" },
  { icon: <CloudFavicon />, title: "A Cl", active: true },
  {
    icon: (
      <SoundcloudBox>
        <FaSoundcloud size={19} />
      </SoundcloudBox>
    ),
    title: "Design",
  },
  { title: "Free AWS-S" },
  { icon: <UdemyIcon />, title: "AWS C" },
  { icon: github, title: "aws-tra" },
  { icon: github, title: "aws-tra" },
  { icon: github, title: "aws-tra" },
  { title: "TutsGala" },
];

const bookmarks: [string, number, number][] = [
  ["escamarla", 127, 79],
  ["gg", 69, 21],
  ["zucchini", 112, 64],
  ["mrw", 83, 34],
  ["player", 96, 49],
  ["music", 94, 45],
  ["miscs", 92, 43],
  ["to...", 76, 28],
  ["Poland", 110, 54],
];

const options: [string, number][] = [
  ["None of these", 120],
  ["Deploy a gateway-stored AWS Storage Gateway.", 411],
  ["Nothing: S3 is a global service and is not affected by the loss of an availability zone.", 706],
  ["Use lifecycle policies to copy the data to Glacier.", 407],
];

const extensions: React.ReactNode[] = [
  <WrenchIcon />,
  <LibraryIcon />,
  <>
    <ShieldIcon />
    <Badge>11</Badge>
  </>,
  <SunIcon />,
  <SidebarIcon />,
  <ReactIcon />,
  <FaceIcon />,
  <BurstIcon />,
  <ForwardBadge />,
];

const apps: { icon: React.ReactNode; rim?: "bright" | "soft" }[] = [
  { icon: <StartIcon /> },
  { icon: <IeIcon /> },
  { icon: <FirefoxIcon />, rim: "bright" },
  { icon: <OutlookIcon /> },
  { icon: <InfinityIcon /> },
  { icon: <VisualStudio /> },
  { icon: <VisualStudioInverse /> },
  { icon: <VisualStudioLight /> },
  { icon: <RocketIcon /> },
  { icon: <NotepadIcon /> },
  { icon: <SublimeIcon /> },
  { icon: <DiamondIcon /> },
  { icon: <PowerShellIcon /> },
  { icon: <TerminalIcon /> },
  { icon: <MergeIcon /> },
  { icon: <SphereIcon /> },
  { icon: <CodeIcon /> },
  { icon: <ExplorerIcon />, rim: "soft" },
];

const CURRENT = 27;
const selected = 2;

export default function App() {
  return (
    <Desktop>
      <Global />
      <Upper>
        <Wallpaper>
          <Stroke w={10} h={14} sw={1} d="M6 12 9 3M7 9H9" color="#444" />
        </Wallpaper>
        <Frame>
          <TabStrip>
            <StripLead />
            <ScrollLeft>
              <Stroke w={12} h={22} sw={3} d="M10 1.500 2 11 10 20.500" color="#4f8f8e" />
            </ScrollLeft>
            <TabList>
              {tabs.map((t, i) => (
                <Tab key={i} $active={t.active}>
                  {t.icon}
                  <TabTitle>{t.title}</TabTitle>
                  {t.active && <Stroke w={16} h={16} sw={2.4} d="M2 1.500 14 14.500M14 1.500 2 14.500" color="#3c3c3c" />}
                </Tab>
              ))}
              <StripFade />
            </TabList>
            <StripTail>
              <TailButton $w={39} $top={14}>
                <Stroke w={12} h={19} sw={3} d="M2 1.500 10 9.500 2 17.500" color="#264a4a" />
              </TailButton>
              <TailButton $w={49} $top={12}>
                <Stroke w={22} h={22} sw={2.8} d="M11 2V20M2 11H20" color="#264a4a" />
              </TailButton>
              <TailButton $w={47} $top={17}>
                <Stroke w={20} h={14} sw={3} d="M2 2.500 10 11 18 2.500" color="#264a4a" />
              </TailButton>
              <WindowButtons>
                <TailButton $w={38} $top={7}>
                  <Stroke w={18} h={18} sw={3} d="M1 13.500H17" color="#222" cap="butt" />
                </TailButton>
                <TailButton $w={42} $top={6}>
                  <Stroke w={20} h={17} sw={2.6} d="M2 3H18V14H2Z" color="#222" cap="butt" />
                </TailButton>
                <CloseButton>
                  <Stroke w={15} h={14} sw={2.6} d="M1.500 1.500 13.500 12.500M13.500 1.500 1.500 12.500" color="#fff" cap="butt" />
                </CloseButton>
              </WindowButtons>
            </StripTail>
          </TabStrip>

          <Inner>
            <Chrome>
              <Toolbar>
                <BackButton>
                  <Stroke w={26} h={24} sw={3} d="M24 12H2.500M11.500 2 2 12 11.500 22" />
                </BackButton>
                <ToolSlot>
                  <Stroke w={24} h={22} sw={2.8} d="M1.500 11H22M13 2 22 11 13 20" color="#b3b3b3" />
                </ToolSlot>
                <ToolSlot>
                  <ReloadIcon />
                </ToolSlot>
                <ToolSlot>
                  <HomeIcon />
                </ToolSlot>
                <Field $w={919} $ml={49}>
                  <Divider $h={0} $ml={12} />
                  <InfoIcon />
                  <Divider $h={0} $ml={8} />
                  <LockIcon />
                  <Url>
                    <Fit w={68}>https://</Fit>
                    <b>
                      <Fit w={107}>acloud.guru</Fit>
                    </b>
                    <Fit w={395}>/exam-simulator/view?attemptId=d9bd00fc</Fit>
                  </Url>
                  <ZoomPill>80%</ZoomPill>
                  <Divider $h={31} $ml={17} />
                  <Divider $h={0} $ml={18} />
                  <svg width="24" height="8" viewBox="0 0 24 8">
                    <circle cx="3" cy="4" r="3" fill="#5c5c5c" />
                    <circle cx="12" cy="4" r="3" fill="#5c5c5c" />
                    <circle cx="21" cy="4" r="3" fill="#5c5c5c" />
                  </svg>
                  <Divider $h={0} $ml={17} />
                  <FaGetPocket size={25} color="#5c5c5c" />
                  <Divider $h={0} $ml={16} />
                  <StarIcon />
                </Field>
                <Field $w={173} $ml={15}>
                  <Divider $h={0} $ml={10} />
                  <Stroke w={26} h={25} sw={3.4} d="M10 2A7.500 7.500 0 1 1 9.900 2ZM15.500 15.500 23.500 23" color="#999" />
                  <SearchText>
                    <Fit w={62}>Search</Fit>
                  </SearchText>
                </Field>
                <Extensions>
                  {extensions.map((e, i) => (
                    <ToolSlot key={i}>{e}</ToolSlot>
                  ))}
                </Extensions>
                <Divider $h={51} $ml={4} />
                <ToolSlot $w={58}>
                  <Stroke w={20} h={20} sw={3} d="M2 2H18M2 10H18M2 18H18" />
                </ToolSlot>
              </Toolbar>
              <Bookmarks>
                <Bookmark $w={145}>
                  <GearIcon />
                  <Fit w={99}>Most Visited</Fit>
                </Bookmark>
                {bookmarks.map(([name, slot, w]) => (
                  <Bookmark key={name} $w={slot}>
                    <FolderIcon />
                    <Fit w={w}>{name}</Fit>
                  </Bookmark>
                ))}
              </Bookmarks>
            </Chrome>

            <Viewport>
              <Page>
                <Header>
                  <Brand>
                    <BrandCloud />
                    <BrandName>
                      <Fit w={169}>A CLOUD GURU</Fit>
                    </BrandName>
                  </Brand>
                  <NavButton $w={77} $gap={3}>
                    <FaBars size={16} />
                    <Fit w={28}>Nav</Fit>
                  </NavButton>
                  <NavButton $w={102} $gap={3}>
                    <Stroke w={7} h={12} sw={1.8} d="M5.500 2 2 6 5.500 10" color="#fff" />
                    <Fit w={61}>Previous</Fit>
                  </NavButton>
                  <NavButton $w={74} $gap={2}>
                    <Fit w={34}>Next</Fit>
                    <Stroke w={7} h={12} sw={1.8} d="M1.500 2 5 6 1.500 10" color="#fff" />
                  </NavButton>
                  <HeaderRight>
                    <OutlineButton $w={161} $h={38} $edge="#dfe1e5">
                      <FaCheck size={14} />
                      <Fit w={111}>Complete Exam</Fit>
                    </OutlineButton>
                    <Timer>
                      <Fit w={80}>01:11:18</Fit>
                    </Timer>
                  </HeaderRight>
                </Header>

                <Card $h={464} $mt={54}>
                  <Eyebrow>
                    <Fit w={99}>QUESTION 27:</Fit>
                  </Eyebrow>
                  <Question>
                    <Fit w={1522}>
                      You've been tasked with setting up an S3 solution to store large amounts of critical data. With high availability and fault-tolerance in mind, what
                    </Fit>
                    <Fit w={1563}>
                      further safeguards should you implement to protect your data in the event that an entire AZ was lost to a natural (or similarly catastrophic) disaster?
                    </Fit>
                  </Question>
                  <Options>
                    {options.map(([text, w], i) => (
                      <Option key={text}>
                        <Radio $on={i === selected} />
                        <Fit w={w}>{text}</Fit>
                      </Option>
                    ))}
                  </Options>
                  <Actions>
                    <AnswerButton>
                      <Fit w={53}>Answer</Fit>
                    </AnswerButton>
                    <OutlineButton $w={241} $h={47} $edge="#c9cbcf">
                      <FaFlag size={15} />
                      <Fit w={178}>Flag Question for Review</Fit>
                    </OutlineButton>
                  </Actions>
                </Card>

                <Card $h={238} $mt={24}>
                  <Eyebrow>
                    <Fit w={108}>QUESTION LIST</Fit>
                  </Eyebrow>
                  <Cells>
                    {Array.from({ length: 60 }, (_, i) => i + 1).map((n) => (
                      <Cell key={n} $state={n < CURRENT ? "done" : n === CURRENT ? "now" : "todo"}>
                        {n}
                      </Cell>
                    ))}
                  </Cells>
                </Card>
              </Page>
              <Scrollbar>
                <ScrollArrow>
                  <Stroke w={14} h={10} sw={2.6} d="M2 8 7 2.500 12 8" color="#555" cap="butt" />
                </ScrollArrow>
                <Thumb />
                <ScrollArrow $end>
                  <Stroke w={14} h={10} sw={2.6} d="M2 2 7 7.500 12 2" color="#555" cap="butt" />
                </ScrollArrow>
              </Scrollbar>
            </Viewport>
          </Inner>
        </Frame>
      </Upper>

      <Taskbar>
        <Apps>
          {apps.map((a, i) => (
            <AppSlot key={i} $first={i === 0} $open={!!a.rim}>
              {a.rim ? <OpenRim $bright={a.rim === "bright"}>{a.icon}</OpenRim> : a.icon}
            </AppSlot>
          ))}
        </Apps>
        <Tray>
          {trayIcons.map((t, i) => (
            <TraySlot key={i}>{t}</TraySlot>
          ))}
        </Tray>
        <Clock>
          <Fit w={43}>22:31</Fit>
          <Fit w={94}>08/07/2018</Fit>
        </Clock>
      </Taskbar>
    </Desktop>
  );
}
